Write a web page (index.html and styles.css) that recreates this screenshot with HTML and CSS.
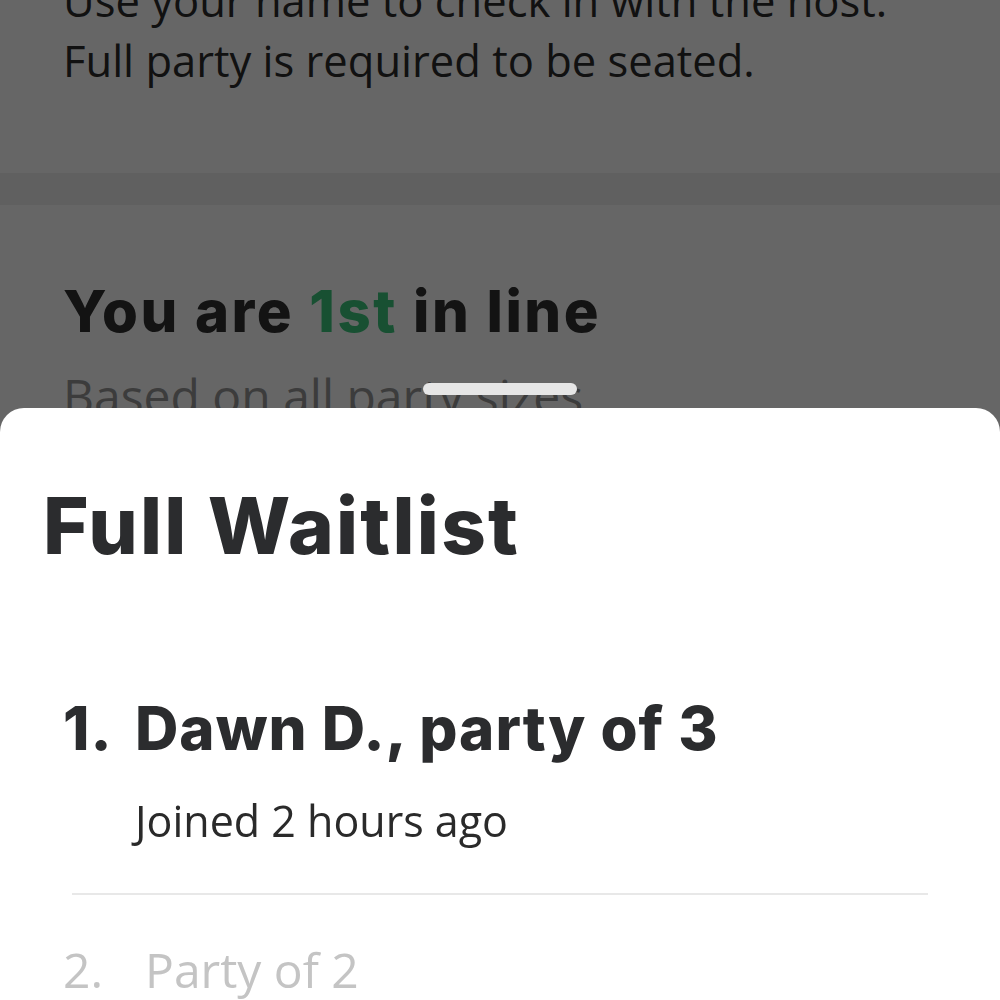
FILE: index.html
```html
<!DOCTYPE html>
<html lang="en">

<head>
    <meta charset="UTF-8">
    <meta name="viewport" content="width=device-width, initial-scale=1.0">
    <title>Full Waitlist</title>
    <link rel="stylesheet" href="styles.css">
</head>

<body>
    <div class="page">
        <div class="notice">
            <p>Use your name to check in with the host.</p>
            <p>Full party is required to be seated.</p>
        </div>
        <div class="band"></div>
        <div class="position">
            <h2>You are <span class="place">1st</span> in line</h2>
            <p class="hint">Based on all party sizes</p>
        </div>
    </div>

    <div class="scrim"></div>
    <div class="handle"></div>

    <div class="sheet">
        <h1>Full Waitlist</h1>
        <ol class="waitlist">
            <li class="entry current">
                <span class="num">1.</span>
                <div class="info">
                    <div class="name">Dawn D., party of 3</div>
                    <div class="joined">Joined 2 hours ago</div>
                </div>
            </li>
            <li class="divider"></li>
            <li class="entry other">
                <span class="num">2.</span>
                <div class="info">
                    <div class="name">Party of 2</div>
                </div>
            </li>
        </ol>
    </div>
</body>

</html>
```

FILE: styles.css
```css
body {
    margin: 0;
    background-color: #ffffff;
    font-family: "Open Sans", "Noto Sans", sans-serif;
    color: #333333;
    height: 100vh;
    overflow: hidden;
}

p {
    margin: 0;
}

/* page behind the sheet */
.notice {
    margin-top: -29px;
    padding: 0 0 82px 63px;
    font-size: 43.5px;
    line-height: 60px;
    color: #2c2c2c;
}

.band {
    height: 32px;
    background-color: #f0f0f0;
}

.position {
    padding: 71px 0 0 63px;
}

.position h2 {
    margin: 0;
    font-family: Inter, "Liberation Sans", sans-serif;
    font-weight: 800;
    font-size: 58px;
    line-height: 70px;
    letter-spacing: 2.5px;
    color: #303030;
}

.place {
    color: #3cc87d;
}

.hint {
    margin-top: 17px;
    font-size: 48px;
    line-height: 65px;
    color: #969696;
}

.scrim {
    position: fixed;
    inset: 0;
    background-color: rgba(0, 0, 0, 0.6);
}

.handle {
    position: fixed;
    top: 383px;
    left: 423px;
    width: 154px;
    height: 12px;
    border-radius: 6px;
    background-color: #e6e6e6;
}

/* bottom sheet */
.sheet {
    position: fixed;
    top: 408px;
    left: 0;
    right: 0;
    bottom: 0;
    background-color: #ffffff;
    border-radius: 24px 24px 0 0;
    padding-top: 71px;
}

.sheet h1 {
    margin: 0 0 0 43px;
    font-family: Inter, "Liberation Sans", sans-serif;
    font-weight: 800;
    font-size: 78px;
    line-height: 94px;
    letter-spacing: 2.2px;
    color: #2b2c2e;
}

.waitlist {
    list-style: none;
    margin: 119px 0 0;
    padding: 0;
}

.entry {
    display: grid;
    padding-left: 63px;
}

.current {
    grid-template-columns: 72px 1fr;
    color: #2b2c2e;
}

.current .num,
.current .name {
    font-family: Inter, "Liberation Sans", sans-serif;
    font-weight: 800;
    font-size: 60px;
    line-height: 72px;
    letter-spacing: 1px;
}

.joined {
    margin-top: 28px;
    font-size: 43px;
    line-height: 58px;
    color: #2a2a2a;
}

.divider {
    height: 2px;
    margin: 43px 72px;
    background-color: #e8e8e8;
}

.other {
    grid-template-columns: 82px 1fr;
    font-size: 48px;
    line-height: 64px;
    color: #c4c4c4;
}
```
